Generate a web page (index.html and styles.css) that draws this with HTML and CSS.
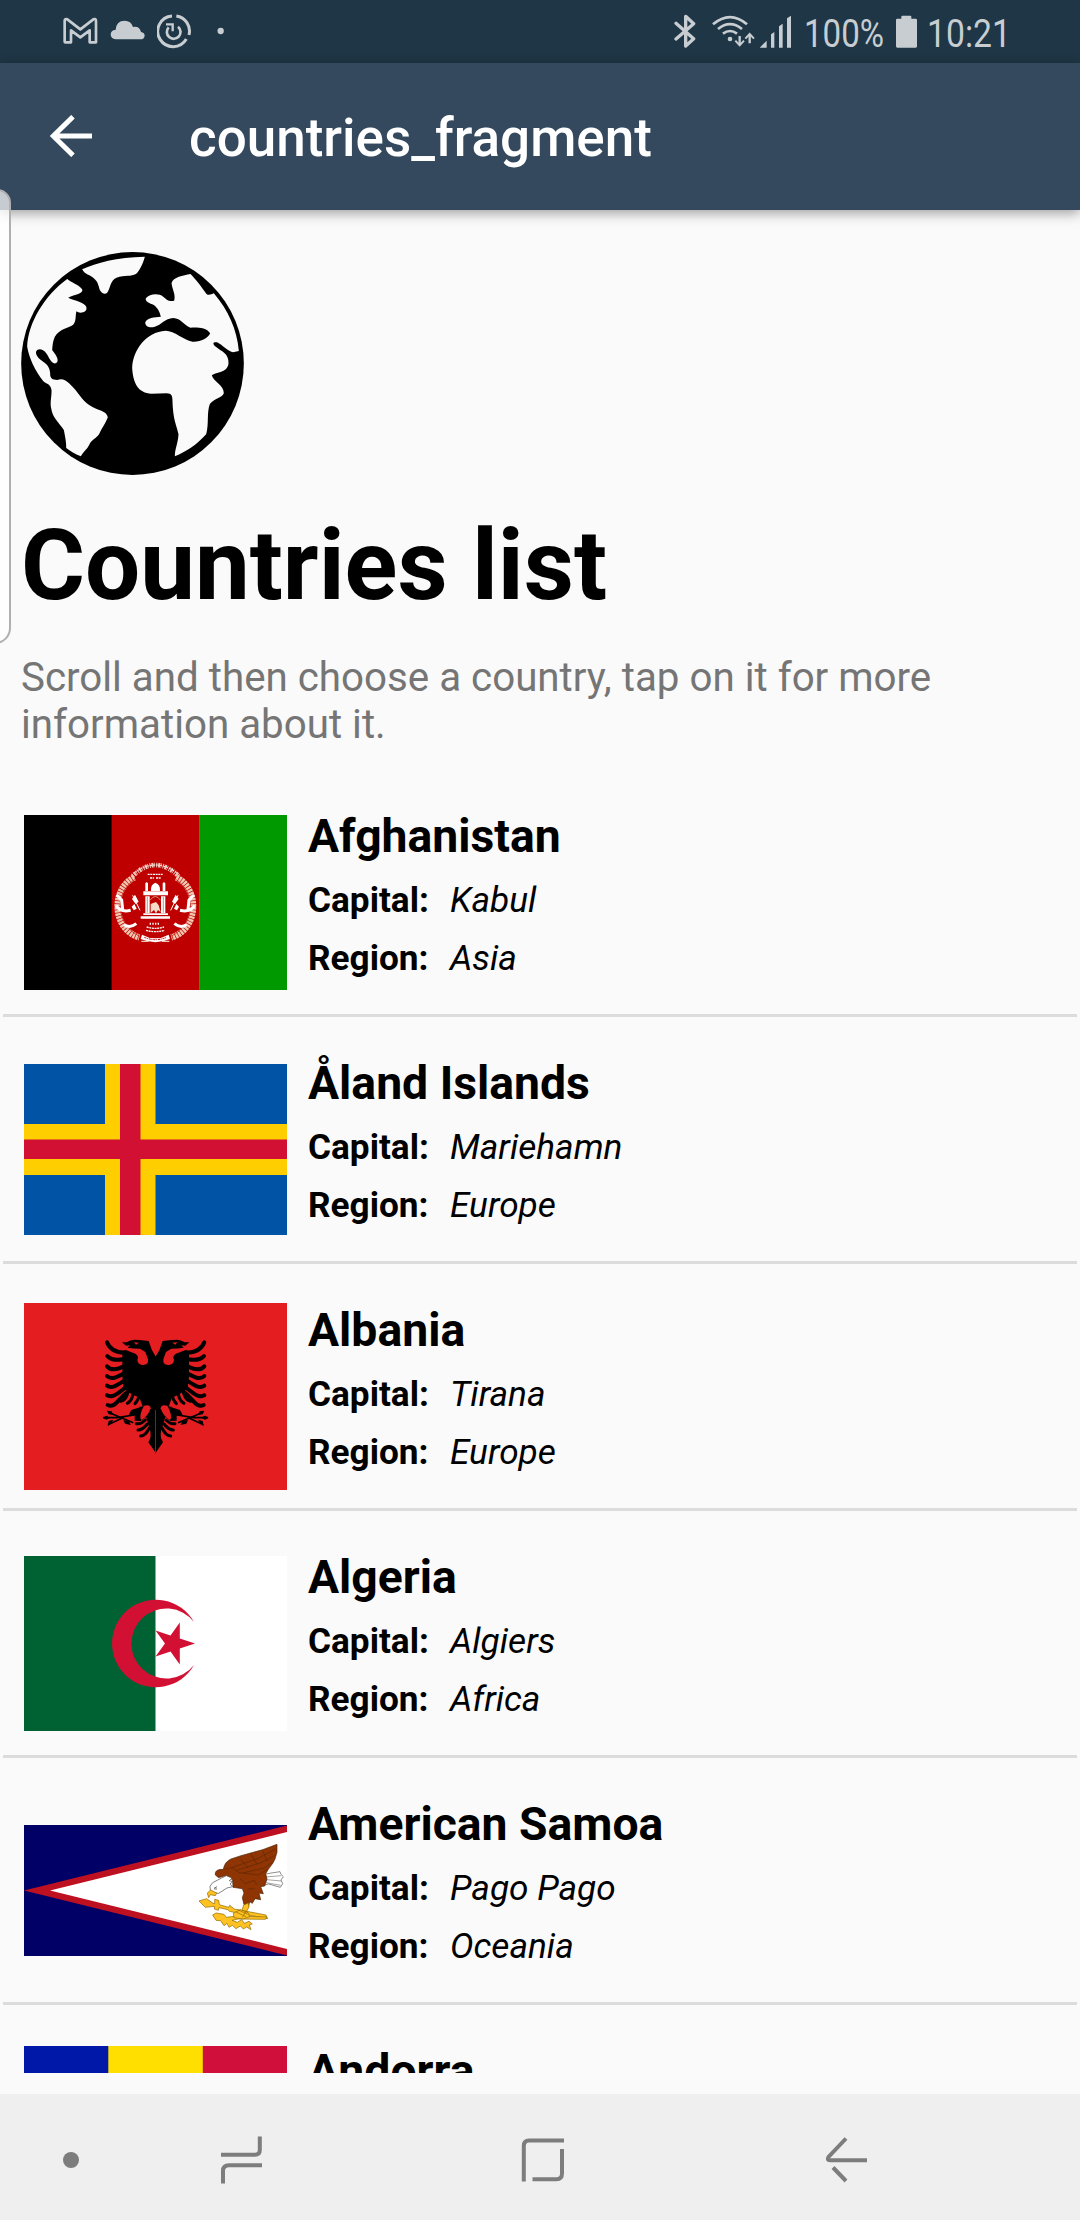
FILE: index.html
```html
<!DOCTYPE html>
<html lang="en">
<head>
<meta charset="utf-8">
<title>countries_fragment</title>
<link rel="stylesheet" href="styles.css">
</head>
<body>
<div class="screen">
  <header class="status">
    <div class="status-left">
      <svg width="35" height="63" viewBox="189 0 105 189"><path d="M194 125V62Q194 57 199 57L202 58L241 88L280 58Q288 55 288 63V127H269V91L241 112L213 91V127H196Q194 127 194 125Z" fill="none" stroke="#c7cdd1" stroke-width="8" stroke-linejoin="round"/></svg>
      <svg width="35" height="63" viewBox="330 0 105 189"><path d="M347 118Q332 117 332 103Q333 90 347 89Q349 62 374 62Q393 62 399 81Q419 78 423 96Q434 98 434 107Q433 118 421 118Z" fill="#c7cdd1"/></svg>
      <svg width="35" height="63" viewBox="472 0 105 189" fill="none" stroke="#c7cdd1"><path d="M517 48A46 46 0 1 0 560 117" stroke-width="9"/><path d="M530 48A46 46 0 0 1 568 105" stroke-width="9"/><path d="M507 82A20.500 20.500 0 1 0 535 80" stroke-width="8"/><path d="M499 73H519V94" stroke-width="7"/></svg>
      <svg class="more-dot" width="8" height="63" viewBox="651 0 24 189"><circle cx="662" cy="93" r="9.500" fill="#c7cdd1"/></svg>
    </div>
    <div class="status-right">
      <svg width="22" height="63" viewBox="99 0 66 189"><path d="M105 70L158 116L134 138V49L158 71L105 117" fill="none" stroke="#c7cdd1" stroke-width="10" stroke-linejoin="round" stroke-linecap="round"/></svg>
      <svg class="wifi" width="43" height="63" viewBox="213 0 129 189" fill="none" stroke="#c7cdd1" stroke-width="8"><path d="M216 73Q267 30 318 73M231 87Q267 58 303 87M246 101Q267 85 288 101"/><circle cx="267" cy="117" r="7" fill="#c7cdd1" stroke="none"/><path d="M296 108V134M326 130V104" stroke-width="7"/><path d="M283 122L296 136L309 122M313 116L326 102L339 116" stroke-width="6"/></svg>
      <svg class="signal" width="33" height="63" viewBox="354 0 99 189" fill="#c7cdd1"><path d="M356 143L377 122V143ZM390 103L400 96V143H390ZM414 79L425 71V143H414ZM438 55L450 47V143H438Z"/></svg>
      <svg class="percent" width="84" height="63"><text x="1" y="47" textLength="80" lengthAdjust="spacingAndGlyphs">100%</text></svg>
      <svg class="battery" width="21" height="63" viewBox="765 0 63 189"><path d="M769 56H781V50Q781 47 784 47H808Q811 47 811 50V56H824Q828 56 828 60V139Q828 143 824 143H769Q765 143 765 139V60Q765 56 769 56Z" fill="#c7cdd1"/></svg>
      <svg class="clock" width="90" height="63"><text x="2" y="47" textLength="84" lengthAdjust="spacingAndGlyphs">10:21</text></svg>
    </div>
  </header>
  <div class="toolbar">
    <svg width="42" height="42" viewBox="150 345 126 126"><path d="M276 408H160M219 350L160 408L219 466" fill="none" stroke="#fff" stroke-width="15"/></svg>
    <h2>countries_fragment</h2>
  </div>
  <div class="edge-panel"></div>
  <main class="content">
    <svg class="globe" viewBox="64 66 668 669">
      <ellipse cx="398" cy="400.500" rx="334" ry="334.500"/>
      <g fill="#fafafa">
        <path d="M247 118C290 98 350 82 435 80C430 100 418 125 408 132C395 140 375 135 350 143C330 152 332 175 322 188C316 195 305 190 300 180C295 165 295 158 285 148C270 132 255 135 247 118Z"/>
        <path d="M202 147C215 158 235 163 247 178C252 192 225 193 205 203C220 212 245 212 258 228C268 245 240 254 230 244C226 255 230 275 220 284C205 295 180 295 165 320C158 335 158 350 157 360C165 372 178 385 172 397C165 405 155 398 148 385C140 365 125 352 112 360C102 370 115 385 130 395C145 405 150 415 151 430C150 445 158 450 172 450C185 445 197 448 210 462C235 485 245 510 268 525C290 542 320 540 324 562C318 580 305 595 298 612C290 625 275 628 268 645C262 658 250 665 243 679C225 672 212 663 199 654C200 640 196 620 192 600C180 580 158 565 154 535C150 515 156 500 155 480C152 460 138 462 130 453C105 420 88 385 82 350C84 280 135 195 202 147Z"/>
        <path d="M572 132C550 137 520 140 515 160C518 180 528 195 523 212C505 215 500 208 490 200C478 190 450 190 438 205C435 215 450 220 462 225C475 235 480 248 483 260C465 262 440 262 436 278C438 292 452 294 465 290C485 285 495 265 520 264C545 265 550 285 572 293C592 292 620 292 631 310C625 325 600 337 578 335C550 330 525 302 497 302C440 305 398 360 397 415C400 460 415 490 455 491L500 490C517 490 518 500 518 515C520 570 530 585 536 612C535 640 525 655 525 679C560 665 590 645 619 613C628 580 620 550 630 522C645 505 665 505 672 490C672 465 640 455 636 436C650 425 680 430 686 402C688 370 665 365 650 352C635 340 640 335 652 337C668 345 685 365 700 367L717 363C712 300 685 240 642 190C635 192 628 198 620 192C605 170 585 145 572 132Z"/>
      </g>
    </svg>
    <h1>Countries list</h1>
    <p class="intro">Scroll and then choose a country, tap on it for more information about it.</p>
    <ul class="list">
      <li class="row">
        <div class="flag"><svg width="263" height="175" viewBox="24 815 263 175">
          <path d="M24 815h88v175h-88z"/><path fill="#be0000" d="M111.600 815h88v175h-88z"/><path fill="#009900" d="M199.300 815H287v175h-87.700z"/>
          <g transform="translate(100 850) scale(.33333)" fill="none" stroke="#fff">
            <path d="M103 82C30 118 38 240 118 262" stroke="#f0c8b0" stroke-width="19" stroke-dasharray="7 2"/>
            <path d="M229 82C302 118 294 240 214 262" stroke="#f0c8b0" stroke-width="19" stroke-dasharray="7 2"/>
            <path d="M105 88C40 128 48 226 118 258M227 88C292 128 284 226 214 258" stroke="#be0000" stroke-width="2"/>
            <path d="M98 78Q166 12 236 78" stroke="#f0c9bb" stroke-width="14" stroke-dasharray="3 3 6 2 2 4"/>
            <path d="M104 68Q166 22 230 68" stroke-width="3" stroke-dasharray="7 3"/>
            <path d="M143 73h45M150 84h12m6 0h14" stroke-width="4" stroke-dasharray="6 2"/>
            <path d="M50 135L65 150L68 178M282 135L267 150L264 178M48 167Q62 188 92 181M284 167Q270 188 240 181M72 224Q90 236 109 221M260 224Q242 236 223 221" stroke-width="9"/>
            <path d="M126 254Q166 276 206 254L210 267Q166 286 122 267Z" fill="#fff" stroke="none"/>
            <path d="M133 262Q166 276 200 262" stroke="#be0000" stroke-width="3" stroke-dasharray="6 2 3 3"/>
            <path d="M124 274h22m40 0h22" stroke="#f0c9bb" stroke-width="4"/>
            <g fill="#fff" stroke="none">
              <path d="M153 123Q151 104 166 98Q182 104 180 123ZM136 100q4-7 8 0v23h-8zM188 100q4-7 8 0v23h-8zM130 124h74v12h-74zM136 139h13v50h-13zM183 139h13v50h-13zM130 190h74v5h-74zM122 199h88v7h-88z"/>
              <path d="M152 189V162L168 156L176 166L182 187L174 180L168 190L162 180Z" fill="#f5dcc8"/>
              <path d="M96 147l9-13 11 21-9 7zM236 147l-9-13-11 21 9 7zM95 170l8-8 7 14-9 5zM237 170l-8-8-7 14 9 5z"/>
            </g>
            <path d="M150 151Q166 128 182 151M142 140v48m48-48v48" stroke="#d98f71" stroke-width="3"/>
            <path d="M98 136l22 45M234 136l-22 45" stroke-width="3"/>
            <path d="M151 218v8m8-8v8m8-8v8m8-8v8M140 231q26 8 52 0M138 241q28 8 56 0" stroke-width="4" stroke-dasharray="6 2"/>
          </g>
        </svg></div>
        <div class="info"><h3>Afghanistan</h3><dl><dt>Capital:</dt><dd>Kabul</dd><dt>Region:</dt><dd>Asia</dd></dl></div>
      </li>
      <li class="row">
        <div class="flag"><svg width="263" height="171" viewBox="0 0 263 171"><path fill="#0053a5" d="M0 0h263v171H0z"/><path fill="#ffce00" d="M81 0h50.500v60H263v51H131.500v60H81v-60H0V60h81z"/><path fill="#d21034" d="M96 0h20.500v75.500H263v19.500H116.500v76H96V95H0V75.500h96z"/></svg></div>
        <div class="info"><h3>Åland Islands</h3><dl><dt>Capital:</dt><dd>Mariehamn</dd><dt>Region:</dt><dd>Europe</dd></dl></div>
      </li>
      <li class="row">
        <div class="flag"><svg width="263" height="187" viewBox="24 1303 263 187">
          <path fill="#e41e20" d="M24 1303h263v187H24z"/>
          <defs><g id="wing">
            <path d="M198 490L175 457L181 444Q184 425 176 408L168 380L148 350H196V490Z"/>
            <path d="M198 201L186 181L176 153L148 150L133 149Q121 149 110 157L96 157L108 167L120 166L113 173Q130 176 150 176L166 186L174 208Q176 226 158 225Q143 224 142 209Q148 198 136 191L107 180L97 183V260L101 296L130 316L148 322L158 350L198 360Z"/>
            <path d="M164 347H188L176 376L152 393L134 392L134 377L116 375L124 360Z"/>
            <g fill="none" stroke="#000" stroke-width="12" stroke-linecap="round">
              <path d="M51 157C60 180 78 188 104 188M52 198C64 212 82 211 104 207M51 229C64 244 84 238 103 228M51 258C64 272 84 260 106 248M51 287C66 298 84 284 106 270M51 316C70 326 88 306 110 290M53 345C76 356 86 324 114 305"/>
              <path d="M92 334Q108 330 113 310M112 340Q126 332 129 312M135 341Q146 330 147 315" stroke-width="9"/>
              <path d="M139 401Q152 404 166 390M144 420Q158 420 172 402M152 438Q166 438 178 414" stroke-width="9"/>
            </g>
            <path d="M60 369L130 398M40 383H82L132 375M54 404L102 382" fill="none" stroke="#000" stroke-width="5"/>
            <path d="M51 362l14 2 5 11-14-2zM38 383l11-6 12 6-12 6zM53 408l3-15 14-4-6 11zM100 390l18 4 4 11-17-4z"/>
            <path d="M162 347Q181 342 182 355Q174 380 154 390Q145 377 162 347Z" fill="#e41e20"/>
            <path d="M132 157l15 1-9 6z" fill="#e41e20"/>
          </g></defs>
          <g transform="translate(90 1290) scale(.33333)"><use href="#wing"/><use href="#wing" transform="translate(394 0) scale(-1 1)"/></g>
        </svg></div>
        <div class="info"><h3>Albania</h3><dl><dt>Capital:</dt><dd>Tirana</dd><dt>Region:</dt><dd>Europe</dd></dl></div>
      </li>
      <li class="row">
        <div class="flag"><svg width="263" height="175" viewBox="0 0 263 175"><path fill="#fff" d="M0 0h263v175H0z"/><path fill="#006233" d="M0 0h131.500v175H0z"/><path fill="#d21034" d="M170 66A43.800 43.800 0 1 0 170 109A35 35 0 1 1 170 66ZM171 87.500L155.800 92.500V108.500L146.500 95.500L131.500 100.500L141 87.500L131.500 74.500L146.500 79.500L155.800 66.500V82.500Z"/></svg></div>
        <div class="info"><h3>Algeria</h3><dl><dt>Capital:</dt><dd>Algiers</dd><dt>Region:</dt><dd>Africa</dd></dl></div>
      </li>
      <li class="row">
        <div class="flag"><svg width="263" height="131" viewBox="24 1825 263 131">
          <path fill="#006" d="M24 1825h263v131H24z"/><path fill="#bd1021" d="M24 1890.500L287 1825.500V1955.500Z"/><path fill="#fff" d="M50 1890.500L287 1832V1949Z"/>
          <g transform="translate(180 1810) scale(.33333)" stroke="#4c2308" stroke-width="2" stroke-linejoin="round">
            <path d="M256 192L300 185L303 193L310 200L303 210L308 221L301 232L266 222L250 226Z" fill="#fff" stroke="#555"/>
            <path d="M257 201L303 197M259 209L304 213M258 218L302 226" stroke="#777"/>
            <path d="M106 195Q103 177 130 178Q134 155 153 147L183 137L248 119L291 103L291 127L285 147L279 159L265 178L257 191L261 207L254 228L242 230L250 251L237 249L242 269L225 266L217 280L209 275L205 292L192 284L187 263L192 249L187 236L159 232L158 210L139 196L116 203Z" fill="#8f3503"/>
            <path d="M133 178L155 173L177 188L235 195L263 178M155 173L235 145L289 116M170 181L243 158L284 137M188 189L253 174L277 157M180 145L204 174M212 131L231 163M247 119L261 153M180 205L196 221L222 211L232 225M203 237L224 236" fill="none" stroke-width="1.500"/>
            <path d="M139 197L125 204L98 218L90 229L92 247L116 250L141 234L158 230L150 222L158 215L148 212L156 204Z" fill="#fff" stroke="#444"/>
            <path d="M102 235l9-5m-8 7h8" stroke="#222"/>
            <g fill="#ffc221" stroke="#8b6500">
              <path d="M92 240L82 249L86 263L91 254L106 257L110 249ZM191 285L205 279L207 291L199 306L184 308Z"/>
              <path d="M57 273L80 266L99 280L104 281V268L116 271L118 284L146 292L149 286L163 297L258 315L263 326L148 304L144 299L117 293L115 301L103 297L104 289L76 292Z"/>
              <path d="M98 315L108 309L132 313L139 322L170 318L260 321L256 328L175 327L156 331L172 337L185 329L193 340L207 334L217 342L208 345L213 359L200 351L190 357L181 348L168 356L157 346L147 352L141 340L132 347L122 332L108 331Z"/>
              <path d="M160 309l22-10 22 9 5 12-20 7-27-4z"/>
              <path d="M168 306l30 14m-23-20 28 13m-16 9 12-19"/>
            </g>
          </g>
        </svg></div>
        <div class="info"><h3>American Samoa</h3><dl><dt>Capital:</dt><dd>Pago Pago</dd><dt>Region:</dt><dd>Oceania</dd></dl></div>
      </li>
      <li class="row">
        <div class="flag"><svg width="263" height="184" viewBox="0 0 263 184"><path fill="#0018a8" d="M0 0h85v184H0z"/><path fill="#fedf00" d="M84.300 0h95v184h-95z"/><path fill="#d0103a" d="M178.800 0H263v184h-84.200z"/></svg></div>
        <div class="info"><h3>Andorra</h3></div>
      </li>
    </ul>
  </main>
  <nav class="navbar">
    <svg class="nav-dot" width="16" height="126" viewBox="63 2094 16 126"><circle cx="71" cy="2160" r="8" fill="#7d7d7d"/></svg>
    <svg class="nav-recents" width="42" height="126" viewBox="221 2094 42 126"><path d="M221 2154.800H255Q259.800 2154.800 259.800 2150V2136.500M223 2183.500V2171Q223 2165.300 229 2165.300H262"/></svg>
    <svg class="nav-home" width="44" height="126" viewBox="521 2094 44 126"><path d="M523.800 2181.500V2146Q523.800 2140.500 529 2140.500H564M562 2149V2173.500Q562 2179.300 556.500 2179.300H532.500"/></svg>
    <svg class="nav-back" width="42" height="126" viewBox="825 2094 42 126"><path d="M846 2138.500L828.500 2157Q826.500 2160.200 830 2160.200H867M833 2167.500L846 2181"/></svg>
  </nav>
</div>
</body>
</html>
```
FILE: styles.css
```css
* { box-sizing: border-box; margin: 0; padding: 0; }
body { background: #fafafa; font-family: Roboto, "Liberation Sans", sans-serif; color: #000; }
svg { display: block; flex: none; }
.screen { position: relative; width: 1080px; height: 2220px; display: flex; flex-direction: column; overflow: hidden; }

.status { height: 63px; flex: none; display: flex; justify-content: space-between; background: #1f3646; padding: 0 65px 0 63px; }
.status-left { display: flex; gap: 12px; }
.more-dot { margin-left: 13px; }
.status-right { display: flex; }
.status-right text { font-size: 39.5px; fill: #c7cdd1; }
.wifi { margin-left: 16px; }
.signal { margin-left: 4px; }
.percent { margin-left: 11px; }
.battery { margin-left: 9px; }
.clock { margin-left: 8px; }

.toolbar { height: 147px; flex: none; display: flex; align-items: center; gap: 97px; padding: 0 50px; background: #34495e; box-shadow: 0 3px 12px rgba(0, 0, 0, .38); z-index: 1; }
.toolbar svg { margin-top: -2px; }
.toolbar h2 { padding-top: 2px; color: #fff; font-size: 53px; font-weight: 500; line-height: 62px; }

.edge-panel { position: absolute; z-index: 2; left: -20px; top: 189px; width: 31px; height: 455px; border: 2px solid #b0b0b0; border-radius: 0 14px 16px 0; background: rgba(255, 255, 255, .72); }

.content { flex: 1; min-height: 0; display: flex; flex-direction: column; padding: 42px 0 21px; }
.globe { width: 223px; height: 223px; margin-left: 21px; }
h1 { margin: 35px 0 0 21px; font-size: 97.8px; line-height: 112px; font-weight: 700; }
.intro { margin: 32px 21px 0; font-size: 40.3px; line-height: 47px; color: #757575; }
.list { flex: 1; min-height: 0; margin: 22px 3px 0; overflow: hidden; list-style: none; }
.row { height: 247px; display: flex; align-items: center; gap: 21px; padding: 21px 21px 0; border-bottom: 3px solid #dcdcdc; }
.info { align-self: flex-start; padding-top: 17px; }
h3 { font-size: 46.3px; line-height: 56px; font-weight: 700; }
dl { display: grid; grid-template-columns: 142px auto; grid-auto-rows: 58px; padding-top: 7px; font-size: 35.2px; line-height: 58px; white-space: nowrap; }
dt { font-weight: 700; }
dd { font-style: italic; }

.navbar { height: 126px; flex: none; display: flex; background: #efefef; padding-left: 63px; }
.navbar path { fill: none; stroke: #7d7d7d; stroke-width: 4; }
.nav-recents { margin-left: 142px; }
.nav-home { margin-left: 258px; }
.nav-back { margin-left: 260px; }
```
